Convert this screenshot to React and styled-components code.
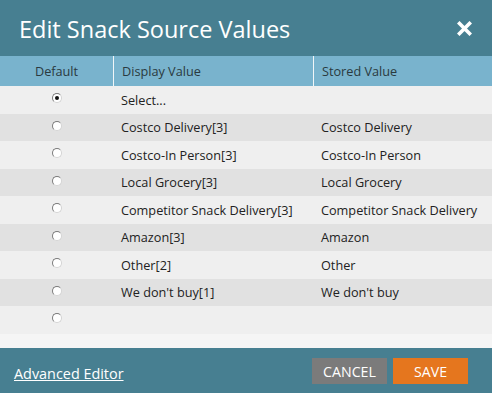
import React, { useState } from 'react';
import styled, { createGlobalStyle } from 'styled-components';

const GlobalStyle = createGlobalStyle`
  html, body {
    margin: 0;
    padding: 0;
    background: #ffffff;
  }
  body {
    font-family: "Open Sans", "DejaVu Sans", sans-serif;
  }
`;

const Dialog = styled.div`
  width: 492px;
  height: 393px;
  display: flex;
  flex-direction: column;
  background: #f5f5f5;
  overflow: hidden;
`;

const TitleBar = styled.div`
  height: 56px;
  background: #477f91;
  display: flex;
  align-items: center;
  justify-content: space-between;
  padding: 0 20px 0 19px;
  box-sizing: border-box;
  h2 {
    margin: 0;
    color: #ffffff;
    font-size: 23.5px;
    font-weight: 400;
    padding-top: 1px;
  }
`;

const CloseButton = styled.button`
  border: 0;
  background: none;
  padding: 0;
  width: 16px;
  height: 16px;
  display: flex;
  align-items: center;
  justify-content: center;
  cursor: pointer;
`;

const Table = styled.div`
  flex: 1;
  display: flex;
  flex-direction: column;
`;

const Row = styled.div`
  display: grid;
  grid-template-columns: 113px 200px 1fr;
  height: ${p => (p.$head ? '30px' : '27.5px')};
  align-items: center;
  background: ${p => (p.$head ? '#79b3cd' : p.$odd ? '#e1e1e1' : '#efefef')};
  color: ${p => (p.$head ? '#2a3a40' : '#222222')};
  font-size: 12.7px;
`;

const Cell = styled.div`
  height: 100%;
  display: flex;
  align-items: center;
  justify-content: ${p => (p.$center ? 'center' : 'flex-start')};
  padding-left: ${p => (p.$center ? '0' : '8px')};
  border-left: ${p => (p.$divider ? '1px solid #f2f6f8' : '0')};
  white-space: nowrap;
  overflow: hidden;
`;

const Radio = styled.span`
  width: 10px;
  height: 10px;
  box-sizing: border-box;
  border-radius: 50%;
  border: 1.5px solid #7a7a7a;
  border-right-color: #d4d4d4;
  border-bottom-color: #d4d4d4;
  background: #ffffff;
  display: flex;
  align-items: center;
  justify-content: center;
  margin-top: -3px;
  cursor: pointer;
  &::after {
    content: '';
    width: 4px;
    height: 4px;
    border-radius: 50%;
    background: ${p => (p.$checked ? '#111111' : 'transparent')};
  }
`;

const Footer = styled.div`
  height: 45px;
  background: #477f91;
  display: flex;
  align-items: center;
  justify-content: space-between;
  padding: 0 24px 0 14px;
  box-sizing: border-box;
`;

const EditorLink = styled.a`
  color: #ffffff;
  font-size: 14.4px;
  text-decoration: underline;
  margin-top: 6px;
`;

const Buttons = styled.div`
  display: flex;
  gap: 6px;
  margin-top: 1px;
`;

const Button = styled.button`
  width: 75px;
  height: 26px;
  border: 0;
  padding: 0;
  color: #ffffff;
  font-family: "Open Sans", sans-serif;
  font-size: 14.2px;
  background: ${p => (p.$primary ? '#e5761e' : '#7b7b7b')};
  cursor: pointer;
`;

const values = [
  ['Select...', ''],
  ['Costco Delivery[3]', 'Costco Delivery'],
  ['Costco-In Person[3]', 'Costco-In Person'],
  ['Local Grocery[3]', 'Local Grocery'],
  ['Competitor Snack Delivery[3]', 'Competitor Snack Delivery'],
  ['Amazon[3]', 'Amazon'],
  ['Other[2]', 'Other'],
  ["We don't buy[1]", "We don't buy"],
  ['', ''],
];

export default function App() {
  const [selected, setSelected] = useState(0);

  return (
    <>
      <GlobalStyle />
      <Dialog>
        <TitleBar>
          <h2>Edit Snack Source Values</h2>
          <CloseButton aria-label="close">
            <svg width="15" height="15" viewBox="0 0 15 15">
              <path d="M2.5 2.5 L12.5 12.5 M12.5 2.5 L2.5 12.5" stroke="#fff" strokeWidth="3.6" strokeLinecap="square" />
            </svg>
          </CloseButton>
        </TitleBar>
        <Table>
          <Row $head>
            <Cell $center>Default</Cell>
            <Cell $divider>Display Value</Cell>
            <Cell $divider>Stored Value</Cell>
          </Row>
          {values.map(([display, stored], i) => (
            <Row key={i} $odd={i % 2 === 1}>
              <Cell $center>
                <Radio $checked={selected === i} onClick={() => setSelected(i)} />
              </Cell>
              <Cell>{display}</Cell>
              <Cell>{stored}</Cell>
            </Row>
          ))}
        </Table>
        <Footer>
          <EditorLink href="#">Advanced Editor</EditorLink>
          <Buttons>
            <Button>CANCEL</Button>
            <Button $primary>SAVE</Button>
          </Buttons>
        </Footer>
      </Dialog>
    </>
  );
}
